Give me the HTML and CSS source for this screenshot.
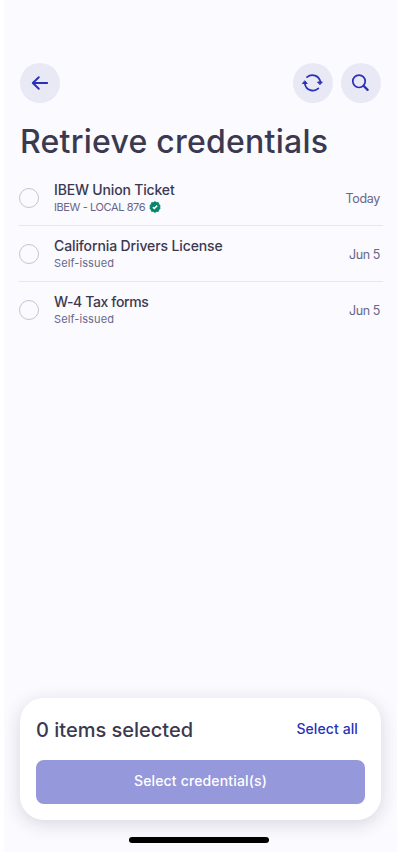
FILE: index.html
```html
<!DOCTYPE html>
<html lang="en">
<head>
<meta charset="utf-8">
<title>Retrieve credentials</title>
<link rel="stylesheet" href="styles.css">
</head>
<body>
<main class="screen">
  <nav class="toolbar">
    <button class="icon-button back" aria-label="Back">
      <svg width="40" height="40" viewBox="0 0 40 40"><path d="M27.200 20H13M18.800 14.200L12.800 20l6 5.800"/></svg>
    </button>
    <button class="icon-button" aria-label="Refresh">
      <svg width="40" height="40" viewBox="0 0 40 40"><path d="M14 14.200A8.100 8.100 0 0 1 27.400 19M25.400 25.400A8.100 8.100 0 0 1 11.900 20.800"/><path class="solid" d="M24.900 19h4.400l-2.200 2.400zM9.800 20.500h4.400L12 18z"/></svg>
    </button>
    <button class="icon-button" aria-label="Search">
      <svg width="40" height="40" viewBox="0 0 40 40"><circle cx="18" cy="18.300" r="6.200"/><path class="handle" d="M23 23.300l3.600 3.600"/></svg>
    </button>
  </nav>
  <h1 class="title">Retrieve credentials</h1>
  <ul class="credentials">
    <li class="credential">
      <span class="radio"></span>
      <div class="details">
        <h2 class="name ticket">IBEW Union Ticket</h2>
        <p class="issuer"><span class="union">IBEW - LOCAL 876</span>
          <svg class="badge" width="12" height="12" viewBox="0 0 12 12"><path class="seal" d="M6 .5l1.500 1 1.900.1.500 1.800 1.300 1.200L10.700 6l.5 1.500-1.300 1.200-.5 1.800-1.800.1L6 11.500l-1.600-.9-1.800-.1-.5-1.800L.8 7.500 1.300 6 .8 4.600l1.300-1.200.5-1.800 1.900-.1z"/><path class="tick" d="M3.900 6.200l1.400 1.300 2.900-2.900"/></svg>
        </p>
      </div>
      <time class="date today">Today</time>
    </li>
    <li class="credential">
      <span class="radio"></span>
      <div class="details">
        <h2 class="name license">California Drivers License</h2>
        <p class="issuer"><span class="self">Self-issued</span></p>
      </div>
      <time class="date">Jun 5</time>
    </li>
    <li class="credential">
      <span class="radio"></span>
      <div class="details">
        <h2 class="name tax">W-4 Tax forms</h2>
        <p class="issuer"><span class="self">Self-issued</span></p>
      </div>
      <time class="date">Jun 5</time>
    </li>
  </ul>
  <section class="selection">
    <div class="summary">
      <h2 class="count">0 items selected</h2>
      <button class="select-all">Select all</button>
    </div>
    <button class="submit">Select credential(s)</button>
  </section>
  <div class="home-indicator"></div>
</main>
</body>
</html>
```
FILE: styles.css
```css
* { box-sizing: border-box; }
body { margin: 0; background: #fff; font-family: Inter, "Liberation Sans", sans-serif; color: #3a3950; }
h1, h2, p, ul { margin: 0; padding: 0; font-weight: 500; }
button { border: 0; padding: 0; font: inherit; }
.screen { display: flex; flex-direction: column; width: 393px; height: 852px; margin: 0 4px; padding-top: 63px; background: #fbfaff; overflow: hidden; }
.toolbar { display: flex; gap: 8px; padding: 0 16px; }
.icon-button { width: 40px; height: 40px; border-radius: 50%; background: #e9e9f5; }
.icon-button svg { display: block; fill: none; stroke: #2931b8; stroke-width: 1.7; stroke-linecap: round; stroke-linejoin: round; }
.icon-button .solid { fill: #2931b8; stroke-width: 1; }
.icon-button .handle { stroke-width: 2.3; }
.back { margin-right: auto; }
.back svg { stroke-width: 1.9; }
.title { margin: 17px 16px 0; font-size: 32px; line-height: 44px; letter-spacing: .24px; white-space: nowrap; }
.credentials { margin: 5px 14px 0; list-style: none; }
.credential { display: flex; align-items: center; height: 56px; padding: 2px 3px 0 1px; }
.credential + .credential { box-shadow: inset 0 1px #e8e7f1; }
.radio { width: 20px; height: 20px; margin-right: 15px; border: 1px solid #c6c3d7; border-radius: 50%; }
.details { flex: 1; margin-top: -2px; white-space: nowrap; }
.name { font-size: 14px; line-height: 20px; }
.ticket { letter-spacing: -.17px; }
.license { letter-spacing: -.12px; }
.tax { letter-spacing: -.38px; }
.union { letter-spacing: -.4px; }
.self { letter-spacing: .1px; }
.issuer { display: flex; align-items: center; gap: 4px; height: 14px; font-size: 11px; line-height: 14px; font-weight: 400; color: #68668a; }
.badge .seal { fill: #078469; stroke: #078469; stroke-width: .7; stroke-linejoin: round; }
.badge .tick { fill: none; stroke: #fff; stroke-width: 1.5; }
.date { padding-top: 2px; font-size: 12.5px; line-height: 18px; font-weight: 400; letter-spacing: -.4px; color: #68668a; }
.today { letter-spacing: -.3px; }
.selection { height: 122px; margin: auto 16px 0; padding: 16px; border-radius: 24px; background: #fff; box-shadow: 0 4px 18px rgba(30, 30, 50, .16); }
.summary { display: flex; align-items: center; justify-content: space-between; height: 32px; padding-right: 7px; }
.count { font-size: 20px; line-height: 32px; }
.select-all { padding-bottom: 2px; background: none; font-size: 14px; font-weight: 500; line-height: 28px; letter-spacing: .1px; color: #2931b8; }
.submit { display: block; width: 100%; height: 44px; margin-top: 14px; padding-bottom: 3px; border-radius: 8px; background: #9598da; color: #fff; font-size: 14px; font-weight: 500; letter-spacing: .15px; }
.home-indicator { flex: none; width: 140px; height: 6px; margin: 17px auto 9px 125px; border-radius: 3px; background: #000; }
```
